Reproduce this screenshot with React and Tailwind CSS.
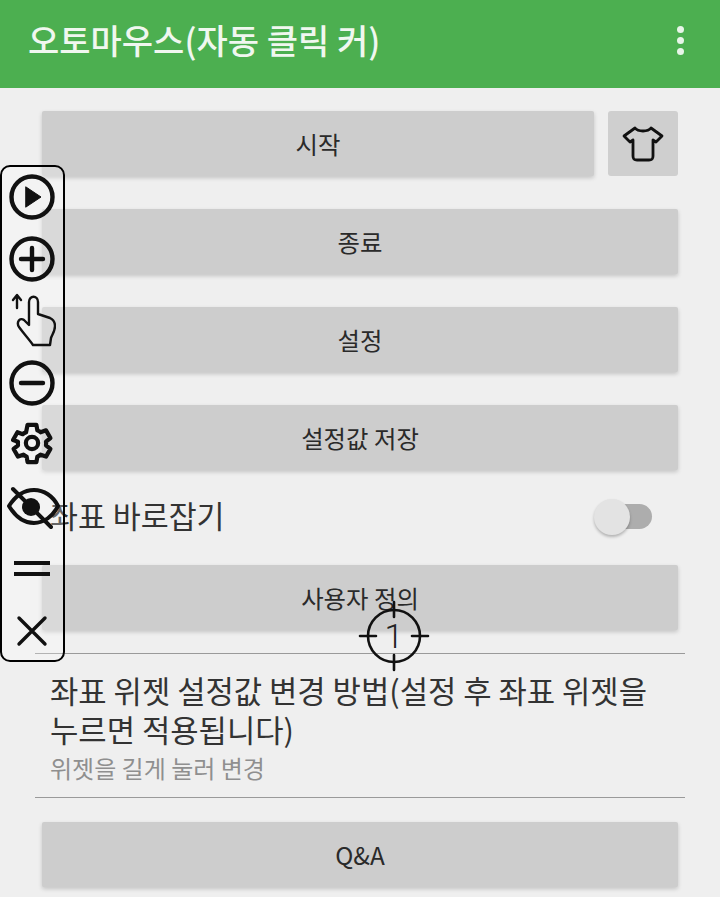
import React from "react";

const font = { fontFamily: '"Noto Sans CJK KR", "Roboto", sans-serif' };

function Btn({ children, className = "" }) {
  return (
    <div className={"h-[65px] flex items-center justify-center rounded-[2px] bg-[#cdcdcd] shadow-[0_2px_4px_rgba(0,0,0,0.18)] text-[24.4px] text-[#2a2a2a] pt-[1px] " + className}>
      {children}
    </div>
  );
}

function Ic({ children, size = 48 }) {
  return (
    <svg width={size} height={size} viewBox="0 0 48 48" fill="none" stroke="#111" strokeWidth="4.4" strokeLinecap="round" strokeLinejoin="round">
      {children}
    </svg>
  );
}

function Slot({ children }) {
  return <div className="h-[62px] shrink-0 flex items-center justify-center -ml-[2px]">{children}</div>;
}

function Widget() {
  return (
    <div className="absolute left-0 top-[165px] w-[65px] h-[497px] rounded-[10px] border-2 border-black bg-[rgba(255,255,255,0.25)] flex flex-col items-center justify-center z-10">
      <Slot>
        <Ic><circle cx="24" cy="24" r="20.5" /><path d="M18 14 L33 24 L18 34 Z" fill="#111" strokeWidth="1" /></Ic>
      </Slot>
      <Slot>
        <Ic><circle cx="24" cy="24" r="20.5" /><path d="M13 24 H35 M24 13 V35" /></Ic>
      </Slot>
      <Slot>
        <svg width="48" height="56" viewBox="0 0 48 56" fill="none" stroke="#111" strokeLinecap="round" strokeLinejoin="round" strokeWidth="2.4">
          <path d="M9 15 V3 M5 7 L9 2 L13 7" strokeWidth="2.4" />
          <path d="M21 32 V9 C21 2 30 2 30 9 V21 L42 25 C46 27 47 29 47 33 C47 38 44 42 43 45 L42 52 H25 C21 46 16 41 11 34 C8 29 12 24 16 27 L21 32 Z" />
        </svg>
      </Slot>
      <Slot>
        <Ic><circle cx="24" cy="24" r="20.5" /><path d="M13 24 H35" /></Ic>
      </Slot>
      <div className="h-[62px] shrink-0 flex items-center justify-center -ml-[2px] -mt-[2px] mb-[2px]">
        <svg width="46" height="46" viewBox="0 0 24 24" fill="none" stroke="#111" strokeWidth="2.2" strokeLinecap="round" strokeLinejoin="round">
          <path d="M9.7 2.5 h4.6 l.5 2.9 c.6.25 1.2.55 1.7 1 l2.8-1 2.3 4-2.3 1.9 c.1.6.1 1.3 0 1.9 l2.3 1.9-2.3 4-2.8-1 c-.5.45-1.1.75-1.7 1 l-.5 2.9 h-4.6 l-.5-2.9 c-.6-.25-1.2-.55-1.7-1 l-2.8 1-2.3-4 2.3-1.9 c-.1-.6-.1-1.3 0-1.9 L2.1 10.4 l2.3-4 2.8 1 c.5-.45 1.1-.75 1.7-1 Z" />
          <circle cx="12" cy="12" r="3.2" />
        </svg>
      </div>
      <div className="h-[62px] w-[54px] shrink-0 flex items-center justify-center">
        <svg width="54" height="48" viewBox="0 0 54 48" fill="none" stroke="#111" strokeWidth="4" strokeLinecap="round" strokeLinejoin="round">
          <path d="M3 23 C10 12 18 7 28 7 C38 7 47 13 52 23 C47 33 38 40 28 40 C18 40 9 33 3 23 Z" />
          <circle cx="25" cy="24" r="9" fill="#111" stroke="none" />
          <path d="M7 6 L45 44" />
        </svg>
      </div>
      <Slot>
        <svg width="36" height="20" viewBox="0 0 36 20" fill="none" stroke="#111" strokeWidth="4"><path d="M0 4 H36 M0 15 H36" /></svg>
      </Slot>
      <Slot>
        <svg width="32" height="32" viewBox="0 0 32 32" fill="none" stroke="#111" strokeWidth="3.4" strokeLinecap="round"><path d="M3 3 L29 29 M29 3 L3 29" /></svg>
      </Slot>
    </div>
  );
}

function Crosshair() {
  return (
    <div className="absolute left-[358px] top-[600px] w-[72px] h-[72px] z-10 flex items-center justify-center">
      <svg className="absolute inset-0" width="72" height="72" viewBox="0 0 72 72" fill="none" stroke="#111" strokeWidth="2.6">
        <circle cx="36" cy="36" r="26" />
        <path d="M36 2 V17 M36 55 V70 M2 36 H18 M54 36 H70" strokeLinecap="round" />
      </svg>
      <span className="relative text-[34px] leading-none text-[#222]" style={{ fontFamily: '"Roboto", sans-serif', fontWeight: 300 }}>1</span>
    </div>
  );
}

export default function App() {
  return (
    <div className="relative w-[720px] h-[897px] overflow-hidden bg-[#efefef]" style={font}>
      <header className="h-[88px] bg-[#4caf50] flex items-center justify-between pl-[28px] pr-[36px] pb-[8px]">
        <h1 className="text-[34px] leading-none text-[#f0f7ef] font-medium">오토마우스(자동 클릭 커)</h1>
        <div className="flex flex-col gap-[4px]">
          <span className="w-[7px] h-[7px] rounded-full bg-[#e8f5e9]" />
          <span className="w-[7px] h-[7px] rounded-full bg-[#e8f5e9]" />
          <span className="w-[7px] h-[7px] rounded-full bg-[#e8f5e9]" />
        </div>
      </header>

      <main className="px-[42px] pt-[23px] flex flex-col">
        <div className="flex gap-[14px]">
          <Btn className="flex-1">시작</Btn>
          <div className="w-[70px] h-[65px] rounded-[3px] bg-[#cfcfcf] flex items-center justify-center">
            <svg width="42" height="36" viewBox="0 0 42 36" fill="none" stroke="#111" strokeWidth="2.8" strokeLinejoin="round" strokeLinecap="round">
              <path d="M13 2 C16 6 26 6 29 2 L40 10 L34 16 L31 14 V30 C31 33 30 34 27 34 H15 C12 34 11 33 11 30 V14 L8 16 L2 10 Z" />
            </svg>
          </div>
        </div>
        <Btn className="mt-[33px]">종료</Btn>
        <Btn className="mt-[33px]">설정</Btn>
        <Btn className="mt-[33px]">설정값 저장</Btn>

        <div className="h-[95px] flex items-center justify-between pl-[8px] pr-[26px]">
          <span className="text-[30.4px] leading-none text-[#333] -mt-[4px]">좌표 바로잡기</span>
          <div className="relative w-[58px] h-[36px] flex items-center -mt-[2px]">
            <div className="absolute right-0 w-[42px] h-[25px] rounded-full bg-[#adadad]" />
            <div className="absolute left-0 w-[36px] h-[36px] rounded-full bg-[#e3e3e3] shadow-[0_2px_3px_rgba(0,0,0,0.25)]" />
          </div>
        </div>

        <Btn>사용자 정의</Btn>
      </main>

      <div className="mx-[35px] mt-[23px] border-t border-[#9a9a9a]" />
      <section className="pl-[50px] pr-[60px] pt-[16px] h-[143px]">
        <p className="text-[30.8px] leading-[39px] text-[#333]">좌표 위젯 설정값 변경 방법(설정 후 좌표 위젯을 누르면 적용됩니다)</p>
        <p className="text-[24px] leading-[33px] text-[#8f8f8f] mt-[3px]">위젯을 길게 눌러 변경</p>
      </section>
      <div className="mx-[35px] border-t border-[#9a9a9a]" />
      <div className="px-[42px] pt-[24px]">
        <Btn>Q&amp;A</Btn>
      </div>

      <Widget />
      <Crosshair />
    </div>
  );
}
